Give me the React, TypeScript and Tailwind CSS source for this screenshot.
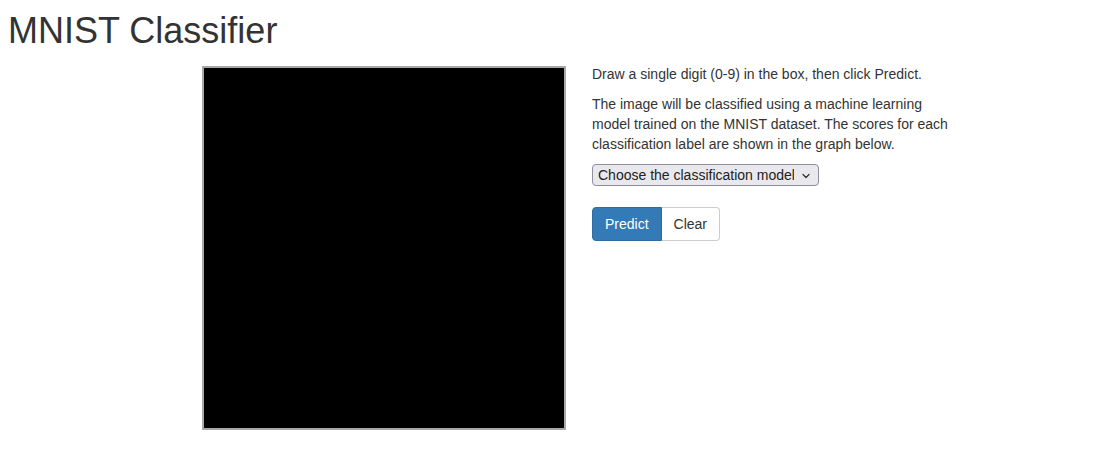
import { ChevronDown } from "lucide-react";

export default function App() {
  return (
    <div className="min-h-[463px] bg-white px-2 font-['Liberation_Sans',Arial,sans-serif] text-[14px] leading-[20px] text-[#333]">
      {/* Title */}
      <h1 className="pt-[11px] text-[36px] leading-[39.6px] font-normal">MNIST Classifier</h1>

      <div className="mt-[13px] flex items-start">
        {/* Drawing canvas */}
        <div className="ml-[194px] mt-[2px] h-[364px] w-[364px] border-2 border-[#a8a8a8] bg-black" />

        {/* Controls */}
        <div className="ml-[26px] w-[362px]">
          <p className="mb-[10px]">Draw a single digit (0-9) in the box, then click Predict.</p>
          <p className="mb-[10px]">
            The image will be classified using a machine learning model trained on the MNIST dataset. The
            scores for each classification label are shown in the graph below.
          </p>

          <div className="relative mt-[5px] h-[22px] w-[227px]">
            <select className="h-[22px] w-full appearance-none rounded-[4px] border border-[#8f8f9d] bg-[#e9e9ed] pl-[5px] pr-6 text-[14px] leading-[20px] text-[#222]">
              <option>Choose the classification model</option>
            </select>
            <ChevronDown
              size={12}
              strokeWidth={2.5}
              className="pointer-events-none absolute right-[7px] top-[6px] text-[#333]"
            />
          </div>

          <div className="mt-[21px] flex">
            <button
              type="button"
              className="h-[34px] rounded-l-[4px] border border-[#2e6da4] bg-[#337ab7] px-3 text-white"
            >
              Predict
            </button>
            <button
              type="button"
              className="h-[34px] rounded-r-[4px] border border-l-0 border-[#ccc] bg-white px-3 text-[#333]"
            >
              Clear
            </button>
          </div>
        </div>
      </div>
    </div>
  );
}
